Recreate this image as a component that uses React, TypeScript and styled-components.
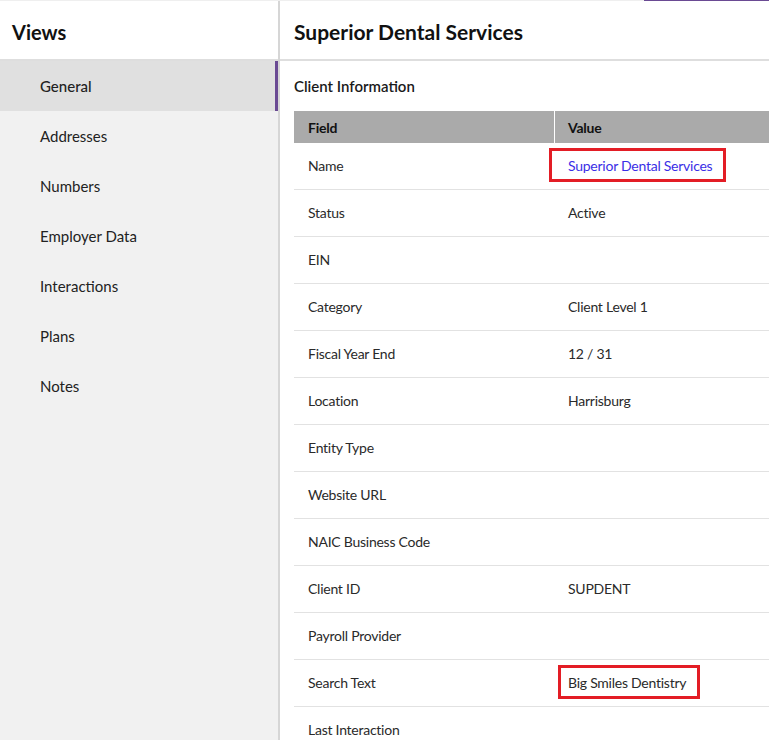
import React from "react";
import styled, { createGlobalStyle } from "styled-components";

const Global = createGlobalStyle`
  html, body { margin: 0; padding: 0; background: #ffffff; }
  body { font-family: "Lato", "Liberation Sans", sans-serif; color: #1f1f1f; }
  * { box-sizing: border-box; }
`;

const Page = styled.div`
  display: flex;
  flex-direction: column;
  min-height: 100vh;
`;

const TopStrip = styled.div`
  display: flex;
  height: 1px;
  background: #efefef;
`;

const TopGap = styled.div`
  flex: 1;
`;

const TopTab = styled.div`
  width: 125px;
  background: #6a4a93;
`;

const Body = styled.div`
  display: flex;
  flex: 1;
`;

const Sidebar = styled.aside`
  width: 280px;
  flex-shrink: 0;
  background: #f1f1f1;
  border-right: 2px solid #d6d6d6;
  display: flex;
  flex-direction: column;
`;

const SidebarHeader = styled.div`
  height: 60px;
  background: #ffffff;
  border-bottom: 2px solid #dedede;
  display: flex;
  align-items: center;
  padding: 3px 0 0 12px;
  font-size: 20px;
  font-weight: 700;
  color: #111;
`;

const NavItem = styled.div<{ $active?: boolean }>`
  height: 50px;
  display: flex;
  align-items: center;
  padding-left: 40px;
  font-size: 15px;
  color: #222;
  font-weight: ${(p) => (p.$active ? 500 : 400)};
  background: ${(p) => (p.$active ? "#e0e0e0" : "transparent")};
  border-right: 3px solid ${(p) => (p.$active ? "#6a4a93" : "transparent")};
`;

const Main = styled.main`
  flex: 1;
  min-width: 0;
  display: flex;
  flex-direction: column;
`;

const MainHeader = styled.div`
  height: 60px;
  border-bottom: 2px solid #dedede;
  display: flex;
  align-items: center;
  padding: 3px 0 0 14px;
  font-size: 21px;
  font-weight: 700;
  color: #111;
`;

const Content = styled.div`
  padding: 15px 0 0 14px;
`;

const SectionTitle = styled.div`
  font-size: 15px;
  font-weight: 600;
  line-height: 20px;
  color: #1a1a1a;
  margin-bottom: 15px;
`;

const Table = styled.div`
  display: grid;
  grid-template-columns: 260px 1fr;
  letter-spacing: -0.25px;
`;

const HeadCell = styled.div<{ $divider?: boolean }>`
  height: 32px;
  background: #aaaaaa;
  display: flex;
  align-items: center;
  padding-left: ${(p) => (p.$divider ? "13px" : "14px")};
  font-size: 14px;
  font-weight: 700;
  color: #111;
  border-left: ${(p) => (p.$divider ? "1px solid #ffffff" : "none")};
`;

const Cell = styled.div`
  height: 47px;
  border-bottom: 1px solid #e2e2e2;
  display: flex;
  align-items: center;
  padding: 0 0 2px 14px;
  font-size: 14px;
  color: #2a2a2a;
`;

const Link = styled.span`
  color: #3b2fe6;
`;

const Marked = styled.span<{ $l: number; $r: number }>`
  display: inline-flex;
  align-items: center;
  height: 34px;
  border: 3px solid #e31d25;
  padding: 0 ${(p) => p.$r}px 0 ${(p) => p.$l}px;
  margin-left: ${(p) => -(p.$l + 3)}px;
`;

const navItems = [
  "General",
  "Addresses",
  "Numbers",
  "Employer Data",
  "Interactions",
  "Plans",
  "Notes",
];

type Row = { field: string; value?: React.ReactNode };

const rows: Row[] = [
  {
    field: "Name",
    value: (
      <Marked $l={16} $r={11}>
        <Link>Superior Dental Services</Link>
      </Marked>
    ),
  },
  { field: "Status", value: "Active" },
  { field: "EIN" },
  { field: "Category", value: "Client Level 1" },
  { field: "Fiscal Year End", value: "12 / 31" },
  { field: "Location", value: "Harrisburg" },
  { field: "Entity Type" },
  { field: "Website URL" },
  { field: "NAIC Business Code" },
  { field: "Client ID", value: "SUPDENT" },
  { field: "Payroll Provider" },
  {
    field: "Search Text",
    value: (
      <Marked $l={7} $r={11}>
        Big Smiles Dentistry
      </Marked>
    ),
  },
  { field: "Last Interaction" },
  { field: "Created" },
];

export default function App() {
  return (
    <>
      <Global />
      <Page>
        <TopStrip>
          <TopGap />
          <TopTab />
        </TopStrip>
        <Body>
          <Sidebar>
            <SidebarHeader>Views</SidebarHeader>
            {navItems.map((n, i) => (
              <NavItem key={n} $active={i === 0}>
                {n}
              </NavItem>
            ))}
          </Sidebar>
          <Main>
            <MainHeader>Superior Dental Services</MainHeader>
            <Content>
              <SectionTitle>Client Information</SectionTitle>
              <Table>
                <HeadCell>Field</HeadCell>
                <HeadCell $divider>Value</HeadCell>
                {rows.map((r) => (
                  <React.Fragment key={r.field}>
                    <Cell>{r.field}</Cell>
                    <Cell>{r.value}</Cell>
                  </React.Fragment>
                ))}
              </Table>
            </Content>
          </Main>
        </Body>
      </Page>
    </>
  );
}
